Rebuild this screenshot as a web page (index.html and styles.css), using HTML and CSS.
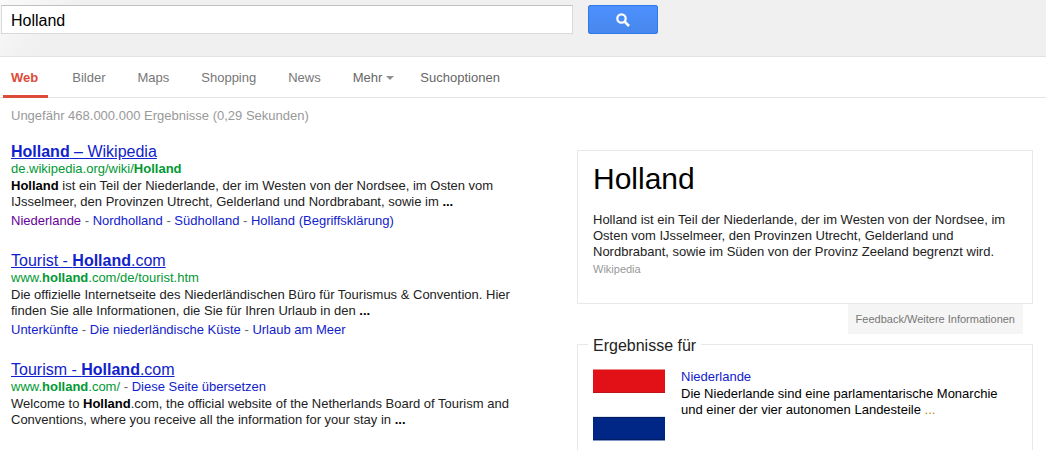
FILE: index.html
```html
<!DOCTYPE html>
<html lang="de">
<head>
<meta charset="utf-8">
<meta name="viewport" content="width=device-width, initial-scale=1">
<title>Holland – Suche</title>
<link rel="stylesheet" href="styles.css">
</head>
<body>
<header class="header">
  <form class="search" role="search">
    <input class="search-input" type="text" name="q" value="Holland" aria-label="Suche">
    <button class="search-button" type="submit" aria-label="Suchen">
      <svg class="search-icon" viewBox="0 0 14 14" aria-hidden="true">
        <circle cx="5.5" cy="5.5" r="4.2" fill="none" stroke="#fff" stroke-width="2.2"/>
        <path d="M8.4 8.4L13 13" stroke="#fff" stroke-width="2.6"/>
      </svg>
    </button>
  </form>
</header>
<nav class="tabs" aria-label="Suchbereiche">
  <a class="tab tab-active" href="#" aria-current="page">Web</a>
  <a class="tab" href="#">Bilder</a>
  <a class="tab" href="#">Maps</a>
  <a class="tab" href="#">Shopping</a>
  <a class="tab" href="#">News</a>
  <button class="tab tab-tool" type="button">Mehr<span class="caret"></span></button>
  <button class="tab tab-tool tab-options" type="button">Suchoptionen</button>
</nav>
<p class="stats">Ungefähr 468.000.000 Ergebnisse (0,29 Sekunden)</p>
<main class="columns">
  <section class="results" aria-label="Ergebnisse">
    <article class="result">
      <h3 class="result-title"><a href="#"><b>Holland</b> – Wikipedia</a></h3>
      <cite class="result-url">de.wikipedia.org/wiki/<b>Holland</b></cite>
      <p class="snippet"><b>Holland</b> ist ein Teil der Niederlande, der im Westen von der Nordsee, im Osten vom IJsselmeer, den Provinzen Utrecht, Gelderland und Nordbrabant, sowie im <b>...</b></p>
      <p class="sitelinks"><a class="visited" href="#">Niederlande</a> - <a href="#">Nordholland</a> - <a href="#">Südholland</a> - <a href="#">Holland (Begriffsklärung)</a></p>
    </article>
    <article class="result">
      <h3 class="result-title"><a href="#">Tourist - <b>Holland</b>.com</a></h3>
      <cite class="result-url">www.<b>holland</b>.com/de/tourist.htm</cite>
      <p class="snippet">Die offizielle Internetseite des Niederländischen Büro für Tourismus &amp; Convention. Hier finden Sie alle Informationen, die Sie für Ihren Urlaub in den <b>...</b></p>
      <p class="sitelinks"><a href="#">Unterkünfte</a> - <a href="#">Die niederländische Küste</a> - <a href="#">Urlaub am Meer</a></p>
    </article>
    <article class="result">
      <h3 class="result-title"><a href="#">Tourism - <b>Holland</b>.com</a></h3>
      <div class="result-source"><cite>www.<b>holland</b>.com/</cite> - <a href="#">Diese Seite übersetzen</a></div>
      <p class="snippet">Welcome to <b>Holland</b>.com, the official website of the Netherlands Board of Tourism and Conventions, where you receive all the information for your stay in <b>...</b></p>
    </article>
  </section>
  <aside class="sidebar">
    <section class="card">
      <h2 class="card-title">Holland</h2>
      <p class="card-text">Holland ist ein Teil der Niederlande, der im Westen von der Nordsee, im Osten vom IJsselmeer, den Provinzen Utrecht, Gelderland und Nordbrabant, sowie im Süden von der Provinz Zeeland begrenzt wird.</p>
      <a class="card-source" href="#">Wikipedia</a>
    </section>
    <a class="feedback" href="#">Feedback/Weitere Informationen</a>
    <fieldset class="related">
      <legend class="related-legend">Ergebnisse für</legend>
      <div class="related-item">
        <svg class="flag" viewBox="0 0 72 72" role="img" aria-label="Flagge der Niederlande">
          <rect width="72" height="72" fill="#fff"/>
          <rect width="72" height="24" fill="#b9141a"/>
          <rect y="1" width="72" height="22" fill="#e21118"/>
          <rect width="72" height="1" fill="#e58a86"/>
          <rect y="47" width="72" height="1" fill="#dfe4ef"/>
          <rect y="48" width="72" height="23" fill="#001c62"/>
          <rect y="49" width="72" height="21" fill="#002785"/>
          <rect y="71" width="72" height="1" fill="#8096c4"/>
        </svg>
        <div class="related-body">
          <a class="related-link" href="#">Niederlande</a>
          <p class="related-text">Die Niederlande sind eine parlamentarische Monarchie und einer der vier autonomen Landesteile <span class="more">...</span></p>
        </div>
      </div>
    </fieldset>
  </aside>
</main>
</body>
</html>
```
FILE: styles.css
```css
* {
  box-sizing: border-box;
}

body {
  margin: 0;
  min-height: 100vh;
  display: flex;
  flex-direction: column;
  background: #fff;
  color: #222;
  font: 13px/16px "Liberation Sans", Arial, sans-serif;
}

h2, h3, p {
  margin: 0;
  font-weight: normal;
}

a {
  color: #12c;
  text-decoration: none;
}

cite {
  color: #093;
  font-style: normal;
}

.header {
  padding: 5px 1px 22px;
  border-bottom: 1px solid #e2e2e2;
  background: linear-gradient(135deg, #fafafa 0, #f0f0f0 60px);
}

.search {
  display: flex;
  gap: 15px;
}

.search-input {
  flex: 0 1 572px;
  min-width: 0;
  height: 29px;
  padding: 2px 9px 0;
  border: 1px solid #d9d9d9;
  border-top-color: #c0c0c0;
  border-radius: 0;
  background: #fff;
  color: #000;
  font: 16px "Liberation Sans", Arial, sans-serif;
}

.search-button {
  display: flex;
  align-items: center;
  justify-content: center;
  width: 70px;
  height: 29px;
  padding: 0;
  border: 1px solid #3079ed;
  border-radius: 2px;
  background: linear-gradient(#4d90fe, #4787ed);
}

.search-icon {
  width: 14px;
  height: 14px;
}

.tabs {
  display: flex;
  gap: 16px;
  padding: 0 3px;
  border-bottom: 1px solid #e5e5e5;
}

.tab {
  display: flex;
  align-items: center;
  height: 41px;
  margin-bottom: -1px;
  padding: 3px 8px 0;
  border: 0;
  border-bottom: 3px solid transparent;
  background: none;
  color: #777;
  font: 13px/16px "Liberation Sans", Arial, sans-serif;
}

.tab-active {
  padding-right: 10px;
  border-bottom-color: #dd4b39;
  color: #dd4b39;
  font-weight: bold;
}

.tab-tool {
  color: #666;
}

.tab-options {
  padding-left: 2px;
}

.caret {
  margin-left: 4px;
  border: 4px solid transparent;
  border-top-color: #909090;
  border-bottom-width: 0;
}

.stats {
  padding: 10px 11px 0;
  color: #999;
}

.columns {
  flex: 1;
  display: grid;
  grid-template-columns: minmax(0, 577fr) minmax(0, 456fr);
  padding: 19px 13px 0 0;
}

.results {
  display: flex;
  flex-direction: column;
  gap: 23px;
  max-width: 534px;
  padding-left: 11px;
}

.result-title {
  font-size: 16px;
  line-height: 18px;
}

.result-title a {
  text-decoration: underline;
}

.result-url {
  display: block;
}

.result-source {
  color: #666;
}

.snippet {
  padding-top: 1px;
}

.snippet b {
  color: #000;
}

.sitelinks {
  padding-top: 3px;
  color: #666;
}

.sitelinks .visited {
  color: #609;
}

.sidebar {
  display: flex;
  flex-direction: column;
  padding-top: 7px;
}

.card {
  padding: 11px 15px 25px;
  border: 1px solid #e8e8e8;
}

.card-title {
  padding-bottom: 16px;
  color: #000;
  font-size: 30px;
  line-height: 34px;
}

.card-source {
  display: block;
  color: #999;
  font-size: 11px;
  line-height: 18px;
}

.feedback {
  align-self: flex-end;
  margin-right: 10px;
  padding: 7px 8px;
  background: #f5f5f5;
  color: #777;
  font-size: 11px;
}

.related {
  flex: 1;
  min-width: 0;
  margin: 0;
  padding: 15px 15px 0;
  border: 1px solid #e8e8e8;
  border-bottom: 0;
}

.related-legend {
  margin-left: -5px;
  padding: 4px 5px 0;
  font-size: 16px;
  line-height: 16px;
}

.related-item {
  display: flex;
  gap: 16px;
}

.flag {
  flex: none;
  width: 72px;
  height: 72px;
}

.related-text {
  padding-top: 1px;
  color: #000;
}

.more {
  color: #b8860b;
}
```
